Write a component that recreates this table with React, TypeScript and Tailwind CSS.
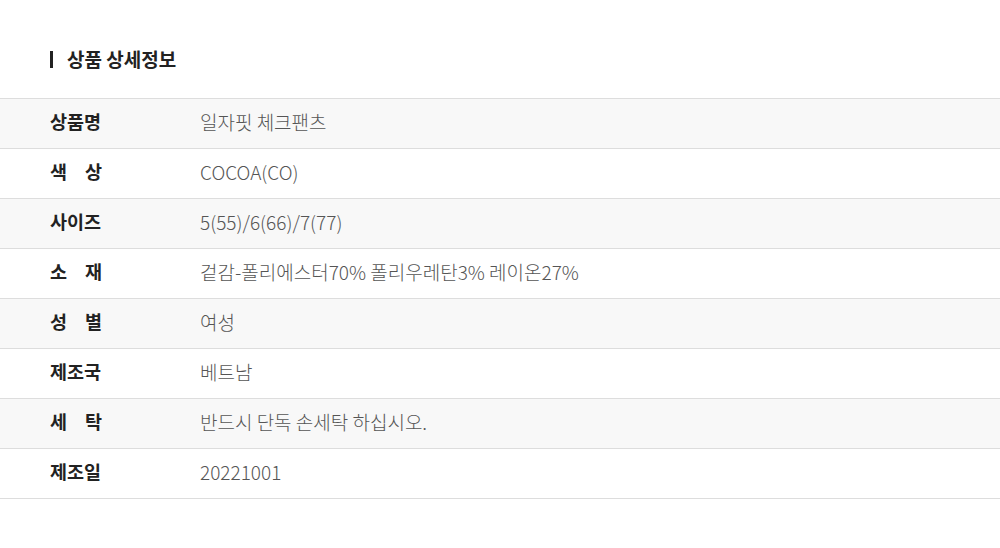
const rows: [string[], string][] = [
  [['상품명'], '일자핏 체크팬츠'],
  [['색', '상'], 'COCOA(CO)'],
  [['사이즈'], '5(55)/6(66)/7(77)'],
  [['소', '재'], '겉감-폴리에스터70% 폴리우레탄3% 레이온27%'],
  [['성', '별'], '여성'],
  [['제조국'], '베트남'],
  [['세', '탁'], '반드시 단독 손세탁 하십시오.'],
  [['제조일'], '20221001'],
]

export default function App() {
  return (
    <div className="min-h-[548px] w-[1000px] bg-white font-['Noto_Sans_CJK_KR','Noto_Sans',sans-serif] text-[#222]">
      <div className="flex h-[98px] items-start pt-[47px] pl-[50px]">
        <span className="mt-[4px] mr-[14px] h-[17px] w-[3px] bg-[#222]" />
        <h2 className="text-[19px] font-bold leading-[23px]">상품 상세정보</h2>
      </div>
      <div className="border-t border-[#dddddd]">
        {rows.map(([label, value], i) => (
          <div
            key={i}
            className={`flex h-[50px] items-center border-b border-[#dddddd] pb-[4px] ${i % 2 === 0 ? 'bg-[#f8f8f8]' : 'bg-white'}`}
          >
            <div className="flex w-[200px] shrink-0 pl-[50px]">
              <span className="flex w-[52px] justify-between text-[18.5px] font-bold leading-none">
                {label.map((c, j) => (
                  <span key={j}>{c}</span>
                ))}
              </span>
            </div>
            <div className="text-[19px] font-light leading-none text-[#555]">{value}</div>
          </div>
        ))}
      </div>
    </div>
  )
}
